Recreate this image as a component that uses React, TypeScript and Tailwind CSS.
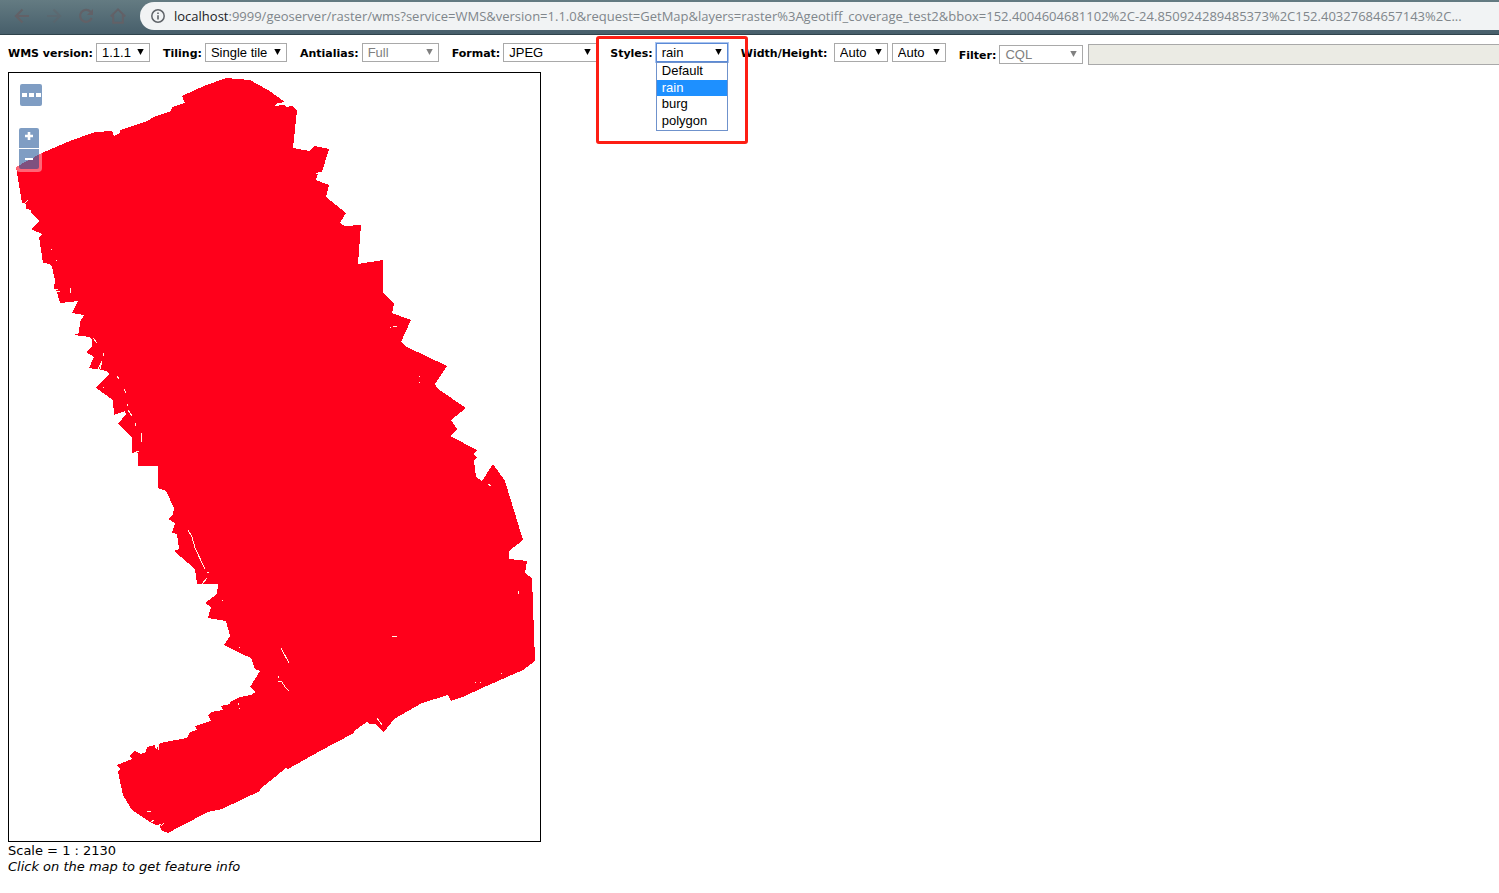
import type { ReactNode } from "react";

const coverageOutline =
  "M16 167 L42 153 L70 141 L95 132 L112 131 L114 136 L120 133 L120 130 L147 121 L156 116 L171 111 L172 107 L185 103 L182 96 L204 86 L226 78 L250 80 L268 90 L285 102 L278 103 L274 106 L284 105 L286 107 L292 106 L297 110 L293 148 L310 151 L314 146 L329 149 L322 172 L313 173 L318 174 L316 180 L329 185 L326 197 L346 213 L340 223 L345 226 L361 225 L358 264 L383 260 L383 292 L394 304 L392 313 L411 320 L401 342 L407 347 L447 366 L435 384 L438 389 L466 408 L451 420 L457 429 L450 436 L477 450 L473 454 L477 457 L474 461 L476 477 L482 481 L493 464 L505 481 L523 540 L509 551 L509 559 L527 561 L525 573 L532 578 L535 661 L523 670 L482 688 L465 696 L451 701 L448 695 L422 703 L394 719 L384 732 L378 727 L376 724 L370 724 L367 722 L354 731 L354 733 L320 751 L288 769 L286 768 L275 777 L260 789 L260 791 L222 809 L208 812 L181 826 L168 833 L162 831 L160 827 L161 824 L156 825 L150 822 L132 810 L123 795 L118 772 L120 769 L117 765 L132 759 L129 756 L135 751 L141 754 L146 752 L147 747 L155 745 L156 750 L160 743 L187 738 L190 732 L197 730 L195 726 L211 721 L208 715 L211 712 L223 710 L221 706 L230 704 L230 702 L240 697 L251 695 L256 692 L250 687 L260 671 L255 669 L251 658 L242 654 L224 645 L230 636 L226 621 L208 618 L211 607 L205 603 L217 594 L218 584 L197 584 L195 569 L174 551 L179 549 L177 534 L172 533 L175 523 L168 519 L173 514 L174 508 L166 491 L158 488 L158 466 L138 466 L138 453 L132 453 L132 438 L118 424 L126 414 L125 411 L114 415 L113 400 L96 388 L109 374 L107 371 L89 368 L94 357 L86 352 L92 346 L92 340 L90 337 L74 335 L79 333 L80 322 L84 315 L72 313 L78 301 L60 303 L57 292 L54 288 L55 280 L52 267 L50 264 L43 263 L39 237 L42 234 L31 229 L39 221 L31 213 L31 210 L26 209 L26 204 L22 203 Z";

const coverageGaps =
  "M24 204 L28 200 M51 249 V250 M56 260 V261 M70 288 L71 293 M55 289 H58 M55 291 H60 M93 338 L97 343 M103 353 V356 M102 361 L98 369 H100 Z M117 376 L119 379 M124 389 L126 393 M127 404 V406 M128 410 L132 416 M135 423 L136 426 M141 433 V442 M134 453 L139 451 M103 387 V388 M188 530 L192 537 L195 548 L205 569 M207 572 L209 573 M207 578 L202 584 M222 600 V601 M281 648 L289 663 M278 676 V678 M278 681 L282 682 L285 687 L289 691 M239 647 V648 M238 703 V705 M239 708 V709 M377 718 L382 725 M392 637 L394 636 H397 M390 327 H391 M393 326 H397 M419 376 V377 M419 382 V383 M488 484 L491 486 M518 591 V594 M501 673 V674 M475 682 V683 M480 682 V683 M158 743 V750 M147 812 L151 811 M151 822 L154 820 M161 826 L164 823";

function BrowserBar() {
  return (
    <header className="flex h-[35px] items-start border-b border-[#2f434b] bg-linear-to-b from-[#647b82] to-[#475f6b] pt-[2px] text-[#626167]">
      <nav className="flex h-7 w-[140px] shrink-0 items-center gap-3 pl-3" aria-label="Browser">
        <button aria-label="Back" className="size-5">
          <svg viewBox="0 0 20 20" fill="none" stroke="currentColor" strokeWidth="2.2">
            <path d="M17 10H4.5M10.5 3.5L4 10L10.5 16.5" />
          </svg>
        </button>
        <button aria-label="Forward" className="size-5 opacity-40">
          <svg viewBox="0 0 20 20" fill="none" stroke="currentColor" strokeWidth="2.2">
            <path d="M3 10H15.5M9.5 3.5L16 10L9.5 16.5" />
          </svg>
        </button>
        <button aria-label="Reload" className="size-5">
          <svg viewBox="0 0 20 20" fill="none" stroke="currentColor" strokeWidth="2.2">
            <path d="M14.5 5.7A6 6 0 1 0 15.7 12" />
            <path d="M17 3V9H11Z" fill="currentColor" stroke="none" />
          </svg>
        </button>
        <button aria-label="Home" className="size-5">
          <svg viewBox="0 0 20 20" fill="none" stroke="currentColor" strokeWidth="2">
            <path d="M2.8 10.5L10 3.4L17.2 10.5M5.2 9V16.7H14.8V9" />
          </svg>
        </button>
      </nav>
      <div className="flex h-7 min-w-0 flex-1 items-center gap-2 rounded-l-full bg-[#f1f3f4] pl-[10px]">
        <svg className="size-4 shrink-0" viewBox="0 0 16 16" fill="none" stroke="#5f6368">
          <circle cx="8" cy="8" r="6.2" strokeWidth="1.5" />
          <path d="M8 7.2V11.5M8 4.5V6" strokeWidth="1.6" />
        </svg>
        <p className="min-w-0 whitespace-nowrap pt-px font-['Open_Sans','Noto_Sans',sans-serif] text-[13px] text-[#80868b]">
          <span className="text-[#202124]">localhost</span>
          :9999/geoserver/raster/wms?service=WMS&amp;version=1.1.0&amp;request=GetMap&amp;layers=raster%3Ageotiff_coverage_test2&amp;bbox=152.4004604681102%2C-24.850924289485373%2C152.40327684657143%2C...
        </p>
      </div>
    </header>
  );
}

type PickerProps = {
  id: string;
  value: string;
  width: string;
  disabled?: boolean;
  open?: boolean;
  name?: string;
  children?: ReactNode;
};

function Picker({ id, value, width, disabled, open, name, children }: PickerProps) {
  return (
    <div className={`relative h-[19px] shrink-0 font-['Liberation_Sans',sans-serif] ${width}`}>
      <select
        id={id}
        aria-label={name}
        disabled={disabled}
        defaultValue={value}
        className={`block h-[19px] w-full appearance-none border bg-white pl-[5px] text-[13px] leading-[17px] outline-none disabled:opacity-100 ${
          disabled ? "border-[#a9a9a9] text-[#808080]" : "text-black"
        } ${open ? "border-[#5b8ad6] ring-1 ring-[#a9c4f0]" : "border-[#a9a9a9]"}`}
      >
        <option>{value}</option>
      </select>
      <svg
        className={`pointer-events-none absolute right-[6px] top-[6px] h-[6px] w-[7px] ${disabled ? "text-[#808080]" : "text-black"}`}
        viewBox="0 0 7 6"
        fill="currentColor"
      >
        <path d="M0.3 0H6.7L3.5 6Z" />
      </svg>
      {children}
    </div>
  );
}

type FieldProps = {
  label: string;
  htmlFor: string;
  lower?: boolean;
  wide?: boolean;
  children: ReactNode;
};

function Field({ label, htmlFor, lower, wide, children }: FieldProps) {
  return (
    <div className={`relative flex shrink-0 ${wide ? "gap-1" : "gap-[3px]"} ${lower ? "pt-[2px]" : ""}`}>
      <label htmlFor={htmlFor} className={`pt-[3px] font-bold leading-4 ${wide ? "w-[89px]" : ""}`}>
        {label}
      </label>
      {children}
    </div>
  );
}

const styleOptions = ["Default", "rain", "burg", "polygon"];

function Toolbar() {
  return (
    <form className="flex items-start gap-[13px] overflow-visible pl-2 pt-2 text-[11px]">
      <Field label="WMS version:" htmlFor="version">
        <Picker id="version" value="1.1.1" width="w-[54px]" />
      </Field>
      <Field label="Tiling:" htmlFor="tiling">
        <Picker id="tiling" value="Single tile" width="w-[82px]" />
      </Field>
      <Field label="Antialias:" htmlFor="antialias">
        <Picker id="antialias" value="Full" width="w-[77px]" disabled />
      </Field>
      <Field label="Format:" htmlFor="format">
        <Picker id="format" value="JPEG" width="w-[94px]" />
      </Field>
      <Field label="Styles:" htmlFor="styles">
        <Picker id="styles" value="rain" width="w-[72px]" open>
          <ul
            role="listbox"
            aria-label="Styles"
            className="absolute left-0 top-[19px] z-10 w-[72px] border border-[#6f92cc] bg-white pb-px text-[13px] leading-4 text-black"
          >
            {styleOptions.map((option) => (
              <li
                key={option}
                role="option"
                aria-selected={option === "rain"}
                className={`pl-[5px] first:pb-px last:pt-px ${option === "rain" ? "bg-[#1e90ff] text-white" : ""}`}
              >
                {option}
              </li>
            ))}
          </ul>
        </Picker>
        <div className="pointer-events-none absolute -left-[14px] -right-5 -top-[7px] z-20 h-[108px] rounded-[3px] border-3 border-[#fd1e14]" />
      </Field>
      <Field label="Width/Height:" htmlFor="width" wide>
        <Picker id="width" value="Auto" width="w-[54px]" />
        <Picker id="height" name="Height" value="Auto" width="w-[54px]" />
      </Field>
      <div className="flex min-w-0 flex-1 gap-[5px]">
        <Field label="Filter:" htmlFor="filter" lower>
          <Picker id="filter" value="CQL" width="w-[84px]" disabled />
        </Field>
        <input
          aria-label="Filter expression"
          disabled
          className="mt-px h-[21px] min-w-0 flex-1 border border-r-0 border-[#a9a9a9] bg-[#ebebe4]"
        />
      </div>
    </form>
  );
}

function MapView() {
  return (
    <section className="relative w-[533px] border border-black bg-white" aria-label="Map">
      <svg className="block w-full" viewBox="9 73 531 768" shapeRendering="crispEdges">
        <path d={coverageOutline} fill="#ff001b" />
        <path d={coverageGaps} fill="none" stroke="#fff8e8" strokeWidth="1" />
      </svg>
      <button
        aria-label="Options"
        className="absolute left-[11px] top-[11px] flex size-[22px] items-center justify-center gap-[2px] rounded-[2px] bg-[#003c88]/50"
      >
        <span className="h-1 w-[5px] bg-white" />
        <span className="h-1 w-[5px] bg-white" />
        <span className="h-1 w-[5px] bg-white" />
      </button>
      <div className="absolute left-[7px] top-[52px] flex flex-col gap-px rounded-[4px] bg-white/40 p-[3px]">
        <button
          aria-label="Zoom in"
          className="flex size-5 items-center justify-center rounded-t-[2px] bg-[#003c88]/50 pb-1"
        >
          <svg className="size-2" viewBox="0 0 8 8" stroke="white" strokeWidth="2.6">
            <path d="M0 4H8M4 0V8" />
          </svg>
        </button>
        <button
          aria-label="Zoom out"
          className="flex size-5 items-center justify-center rounded-b-[2px] bg-[#003c88]/50"
        >
          <svg className="size-2" viewBox="0 0 8 8" stroke="white" strokeWidth="2">
            <path d="M0 4H8" />
          </svg>
        </button>
      </div>
    </section>
  );
}

export default function App() {
  return (
    <div className="min-h-screen overflow-x-hidden bg-white font-['DejaVu_Sans',Verdana,sans-serif] text-black">
      <BrowserBar />
      <Toolbar />
      <main className="px-2 pt-[7px]">
        <MapView />
        <div className="pt-px text-[13px] leading-4">
          <p>Scale = 1 : 2130</p>
          <p className="italic">Click on the map to get feature info</p>
        </div>
      </main>
    </div>
  );
}
